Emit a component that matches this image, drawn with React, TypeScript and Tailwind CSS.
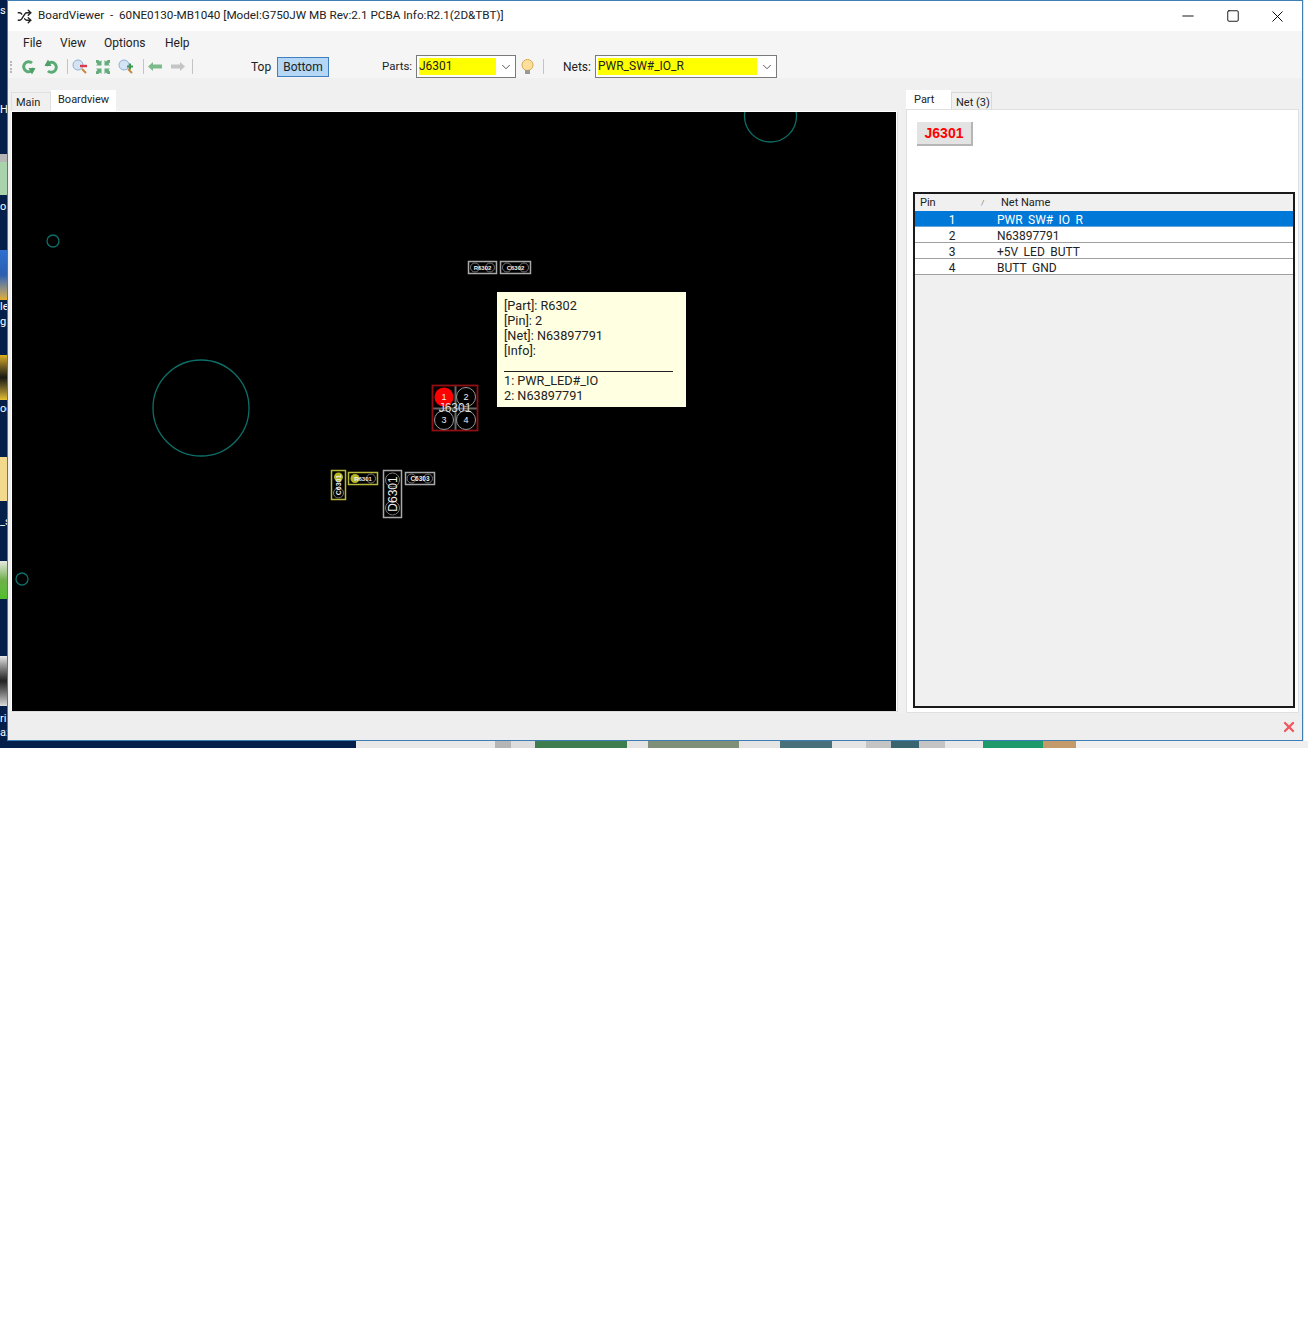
import { ChevronDown, Minus, Square, X, Shuffle } from 'lucide-react';

const font = { fontFamily: "Roboto, 'Noto Sans', sans-serif" };

// bits of the desktop that show left of the window
const desktopBits = [
  { h: 'h-[22px]', text: 's' },
  { h: 'h-[78px]', text: '' },
  { h: 'h-[20px]', text: 'H' },
  { h: 'h-[34px]', text: '' },
  { h: 'h-[8px]', cls: 'bg-[#b5b5b5]' },
  { h: 'h-[33px]', cls: 'bg-[#a9d3ab]' },
  { h: 'h-[24px]', text: 'o' },
  { h: 'h-[31px]', text: '' },
  { h: 'h-[50px]', cls: 'bg-gradient-to-b from-[#2f6fd0] via-[#2b5fb0] to-[#e2ad1c]' },
  { h: 'h-[14px]', text: 'le' },
  { h: 'h-[16px]', text: 'g' },
  { h: 'h-[25px]', text: '' },
  { h: 'h-[45px]', cls: 'bg-gradient-to-b from-[#e0b020] via-[#1a1a10] to-[#e8c030]' },
  { h: 'h-[18px]', text: 'oc' },
  { h: 'h-[39px]', text: '' },
  { h: 'h-[44px]', cls: 'bg-[#f2d98c]' },
  { h: 'h-[14px]', text: '' },
  { h: 'h-[14px]', text: '_s' },
  { h: 'h-[32px]', text: '' },
  { h: 'h-[38px]', cls: 'bg-gradient-to-b from-[#e8e8e0] via-[#6fb04a] to-[#4fc02a]' },
  { h: 'h-[57px]', text: '' },
  { h: 'h-[50px]', cls: 'bg-gradient-to-b from-[#e8e8e8] via-[#222222] to-[#dddddd]' },
  { h: 'h-[6px]', text: '' },
  { h: 'h-[14px]', text: 'ri' },
  { h: 'h-[14px]', text: 'a:' },
];

const bottomBits = [
  { w: 'w-[356px]', cls: 'bg-[#04204a]' },
  { w: 'w-[139px]', cls: 'bg-[#e8e8e8]' },
  { w: 'w-[16px]', cls: 'bg-[#b5b5b5]' },
  { w: 'w-[24px]', cls: 'bg-[#dddddd]' },
  { w: 'w-[92px]', cls: 'bg-[#3f7d4e]' },
  { w: 'w-[21px]', cls: 'bg-[#e4e4e4]' },
  { w: 'w-[91px]', cls: 'bg-[#7f8f78]' },
  { w: 'w-[41px]', cls: 'bg-[#e4e4e4]' },
  { w: 'w-[52px]', cls: 'bg-[#47707a]' },
  { w: 'w-[34px]', cls: 'bg-[#e4e4e4]' },
  { w: 'w-[25px]', cls: 'bg-[#c4c4c4]' },
  { w: 'w-[28px]', cls: 'bg-[#3a6570]' },
  { w: 'w-[26px]', cls: 'bg-[#c4c4c4]' },
  { w: 'w-[38px]', cls: 'bg-[#e8e8e8]' },
  { w: 'w-[60px]', cls: 'bg-[#1f9a6a]' },
  { w: 'w-[33px]', cls: 'bg-[#c49a6a]' },
  { w: 'flex-1', cls: 'bg-[#efefef]' },
];

const pins = [
  { pin: '1', net: 'PWR_SW#_IO_R', selected: true },
  { pin: '2', net: 'N63897791', selected: false },
  { pin: '3', net: '+5V_LED_BUTT', selected: false },
  { pin: '4', net: 'BUTT_GND', selected: false },
];

function TurnIcon({ flip }: { flip?: boolean }) {
  return (
    <svg width="15" height="16" viewBox="0 0 15 16" className={flip ? 'rotate-180' : ''}>
      <path d="M11 4A5 5 0 1 0 12.500 9" fill="none" stroke="#5aab74" strokeWidth="3" />
      <path d="M7.500 9h7l-3.500 6.500z" fill="#4f9f69" />
    </svg>
  );
}

function ZoomIcon({ plus }: { plus?: boolean }) {
  return (
    <svg width="16" height="16" viewBox="0 0 16 16">
      <circle cx="6" cy="6" r="5" fill="#d5e4f5" stroke="#8fb0d4" />
      <path d="M10 10l4 4" stroke="#c58a3c" strokeWidth="2" />
      {plus ? (
        <path d="M9 7.500h6M12 4.500v6" stroke="#3e9a52" strokeWidth="2" />
      ) : (
        <path d="M8 7h7" stroke="#dd3b4b" strokeWidth="2.400" />
      )}
    </svg>
  );
}

function FitIcon() {
  return (
    <svg width="16" height="16" viewBox="0 0 16 16" fill="#63ad7c">
      <path d="M1 1l2.500 0L5 2.500 6.500 1v5.500H1L2.500 5 1 3.500zM15 1h-2.500L11 2.500 9.500 1v5.500H15L13.500 5 15 3.500zM1 15h2.500L5 13.500 6.500 15V9.500H1L2.500 11 1 12.500zM15 15h-2.500L11 13.500 9.500 15V9.500H15L13.500 11 15 12.500z" />
    </svg>
  );
}

function ArrowIcon({ right, color }: { right?: boolean; color: string }) {
  return (
    <svg width="14" height="9" viewBox="0 0 14 9" className={right ? '-scale-x-100' : ''}>
      <path d="M0 4.500L5 0v2.500h9v4H5V9z" fill={color} />
    </svg>
  );
}

function BulbIcon() {
  return (
    <svg width="15" height="16" viewBox="0 0 15 16">
      <circle cx="7.500" cy="6" r="5.500" fill="#fbdf9a" stroke="#d9a850" />
      <rect x="5" y="11" width="5" height="4" fill="#9a9a90" />
    </svg>
  );
}

function Sep() {
  return <div className="w-px h-[15px] bg-[#c4c4c4]" />;
}

function Combo({ value, width, fill }: { value: string; width: string; fill: string }) {
  return (
    <div className={`${width} h-[23px] border border-[#7a7a7a] bg-white flex items-center pl-[2px]`}>
      <div className={`${fill} h-[17px] bg-[#ffff00] text-[12px] leading-[17px] text-[#222]`}>{value}</div>
      <div className="flex-1 flex justify-center">
        <ChevronDown size={14} strokeWidth={1.400} className="text-[#333]" />
      </div>
    </div>
  );
}

function Board() {
  const teal = '#0d6f68';
  return (
    <svg viewBox="12 112 884 599" className="w-full h-full block bg-black">
      <g fill="none" stroke={teal} strokeWidth="1.300">
        <circle cx="770.500" cy="116" r="26" />
        <circle cx="53" cy="241" r="6" />
        <circle cx="201" cy="408" r="48" />
        <circle cx="22" cy="579" r="6" />
      </g>

      {/* R6302 / C6302 */}
      <g fill="none" stroke="#a8a8a8" strokeWidth="1.500">
        <rect x="468.500" y="261.500" width="28" height="12" />
        <rect x="500.500" y="261.500" width="30" height="12" />
      </g>
      <g fill="none" stroke="#777">
        <circle cx="475" cy="267.500" r="4.500" />
        <circle cx="490" cy="267.500" r="4.500" />
        <circle cx="507" cy="267.500" r="4.500" />
        <circle cx="524" cy="267.500" r="4.500" />
      </g>
      <text x="482.500" y="270" fontSize="6" fontWeight="bold" fill="#eee" textAnchor="middle" fontFamily="Liberation Sans">R6302</text>
      <text x="515.500" y="270" fontSize="6" fontWeight="bold" fill="#eee" textAnchor="middle" fontFamily="Liberation Sans">C6302</text>

      {/* J6301 */}
      <path d="M433 408.500h44M455.500 386v44" stroke="#666" strokeWidth="2" />
      <rect x="432.500" y="385.500" width="45" height="45" fill="none" stroke="#8f0f14" strokeWidth="1.800" />
      <circle cx="444" cy="397" r="9.500" fill="#ff0000" />
      <g fill="#000" stroke="#999">
        <circle cx="466" cy="397" r="9.500" />
        <circle cx="444" cy="420" r="9.500" />
        <circle cx="466" cy="420" r="9.500" />
      </g>
      <g fontSize="9" fill="#eee" textAnchor="middle" fontFamily="Liberation Sans">
        <text x="444" y="400">1</text>
        <text x="466" y="400">2</text>
        <text x="444" y="423">3</text>
        <text x="466" y="423">4</text>
      </g>
      <text x="455" y="412" fontSize="12" fill="#ddd" textAnchor="middle" fontFamily="Liberation Sans">J6301</text>

      {/* C6301 */}
      <rect x="331.500" y="470.500" width="14" height="29" fill="none" stroke="#b8b83c" strokeWidth="1.500" />
      <circle cx="338.500" cy="477" r="4.500" fill="#b5b520" />
      <circle cx="338.500" cy="493" r="5" fill="none" stroke="#777" />
      <text transform="translate(341,485) rotate(-90)" fontSize="7" fontWeight="bold" fill="#eee" textAnchor="middle" fontFamily="Liberation Sans">C6301</text>

      {/* R6301 */}
      <rect x="348.500" y="472.500" width="29" height="12" fill="none" stroke="#b8b83c" strokeWidth="1.500" />
      <circle cx="355" cy="478.500" r="4.500" fill="#b5b520" />
      <circle cx="371" cy="478.500" r="4.500" fill="none" stroke="#777" />
      <text x="363" y="481" fontSize="6" fontWeight="bold" fill="#eee" textAnchor="middle" fontFamily="Liberation Sans">R6301</text>

      {/* D6301 */}
      <rect x="383.500" y="470.500" width="18" height="47" fill="none" stroke="#a8a8a8" strokeWidth="1.500" />
      <circle cx="392.500" cy="480" r="7" fill="none" stroke="#777" />
      <circle cx="392.500" cy="508" r="7" fill="none" stroke="#777" />
      <text transform="translate(396.500,494) rotate(-90)" fontSize="12" fill="#eee" textAnchor="middle" fontFamily="Liberation Sans">D6301</text>

      {/* C6303 */}
      <rect x="405.500" y="472.500" width="29" height="12" fill="none" stroke="#a8a8a8" strokeWidth="1.500" />
      <circle cx="411.500" cy="478.500" r="4.500" fill="none" stroke="#777" />
      <circle cx="428" cy="478.500" r="4.500" fill="none" stroke="#777" />
      <text x="420" y="481" fontSize="6.500" fontWeight="bold" fill="#eee" textAnchor="middle" fontFamily="Liberation Sans">C6303</text>
    </svg>
  );
}

export default function App() {
  return (
    <div className="w-[1308px] h-[1328px] bg-white overflow-hidden text-[#222]" style={font}>
      <div className="flex h-[741px]">
        {/* desktop behind the window */}
        <div className="w-[7px] bg-[#04204a] overflow-hidden text-[11px] leading-[14px] text-white shrink-0">
          {desktopBits.map((bit, i) => (
            <div key={i} className={`${bit.h} ${bit.cls ?? ''} whitespace-nowrap flex items-center`}>
              {bit.text}
            </div>
          ))}
        </div>

        {/* window */}
        <div className="w-[1296px] border border-[#3d7fb5] bg-[#f0f0f0] flex flex-col shrink-0">
          <div className="h-[30px] bg-white flex items-center pl-[9px] text-[11.700px] shrink-0">
            <Shuffle size={15} strokeWidth={2.200} className="mr-[6px]" />
            <span className="whitespace-pre">BoardViewer  -  60NE0130-MB1040 [Model:G750JW MB Rev:2.1 PCBA Info:R2.1(2D&TBT)]</span>
            <div className="ml-auto flex items-center text-black">
              <div className="w-[45px] flex justify-center"><Minus size={18} strokeWidth={1.200} /></div>
              <div className="w-[45px] flex justify-center"><Square size={14} strokeWidth={1.500} /></div>
              <div className="w-[45px] flex justify-center"><X size={19} strokeWidth={1.200} /></div>
              <div className="w-[2px]" />
            </div>
          </div>

          <div className="h-[24px] bg-[#f5f5f5] flex items-center pl-[15px] text-[12px] shrink-0">
            <span className="w-[37px]">File</span>
            <span className="w-[44px]">View</span>
            <span className="w-[61px]">Options</span>
            <span>Help</span>
          </div>

          <div className="h-[23px] bg-[#f5f5f5] flex items-center pl-[2px] text-[12px] shrink-0">
            <div className="w-[2px] h-[12px] border-l-2 border-dotted border-[#b8b8b8] mr-[9px]" />
            <div className="flex items-center gap-[8px]">
              <TurnIcon />
              <TurnIcon flip />
            </div>
            <div className="ml-[8px] mr-[4px]"><Sep /></div>
            <div className="flex items-center gap-[7px]">
              <ZoomIcon />
              <FitIcon />
              <ZoomIcon plus />
            </div>
            <div className="ml-[9px] mr-[4px]"><Sep /></div>
            <div className="flex items-center gap-[9px]">
              <ArrowIcon color="#7dbb8a" />
              <ArrowIcon right color="#c4c4c4" />
            </div>
            <div className="ml-[7px]"><Sep /></div>
            <span className="ml-[58px] w-[20px]">Top</span>
            <div className="ml-[6px] w-[52px] h-[20px] bg-[#b3d7f5] border border-[#3f7fc0] flex items-center justify-center">Bottom</div>
            <span className="ml-[53px] w-[29px] text-[11.500px]">Parts:</span>
            <div className="ml-[5px]"><Combo value="J6301" width="w-[100px]" fill="w-[77px]" /></div>
            <div className="ml-[4px]"><BulbIcon /></div>
            <div className="ml-[8px]"><Sep /></div>
            <span className="ml-[19px] w-[28px]">Nets:</span>
            <div className="ml-[4px]"><Combo value="PWR_SW#_IO_R" width="w-[182px]" fill="w-[159px]" /></div>
          </div>

          <div className="flex-1 min-h-0 flex pt-[11px] bg-[#f0f0f0] mt-[1px]">
            {/* board side */}
            <div className="w-[889px] ml-[3px] flex flex-col shrink-0">
              <div className="h-[21px] flex items-end text-[11px] shrink-0">
                <div className="w-[40px] h-[19px] bg-[#f0f0f0] border border-b-0 border-[#e0e0e0] pl-[4px] leading-[19px]">Main</div>
                <div className="w-[65px] h-[21px] bg-white pl-[7px] leading-[20px]">Boardview</div>
              </div>
              <div className="relative h-[601px] w-[887px] bg-white border-r border-b border-[#dcdcdc] pl-[1px] pt-px pr-px">
                <Board />
                <div className="absolute left-[486px] top-[181px] w-[189px] h-[115px] bg-[#ffffe1] pl-[7px] pt-[6px] text-[12.700px] leading-[15px] text-[#222]">
                  <div>[Part]: R6302</div>
                  <div>[Pin]: 2</div>
                  <div>[Net]: N63897791</div>
                  <div>[Info]:</div>
                  <div className="w-[169px] border-b border-[#222] h-[14px] mb-[1px]" />
                  <div>1: PWR_LED#_IO</div>
                  <div>2: N63897791</div>
                </div>
              </div>
            </div>

            {/* part side */}
            <div className="w-[394px] ml-[6px] flex flex-col shrink-0">
              <div className="h-[20px] flex items-end text-[11px] shrink-0 -mb-px">
                <div className="w-[45px] h-[20px] bg-white pl-[8px] leading-[20px]">Part</div>
                <div className="w-[41px] h-[18px] border border-b-0 border-[#d9d9d9] pl-[4px] leading-[20px]">Net (3)</div>
              </div>
              <div className="flex-1 bg-white border border-[#e0e0e0] pl-[6px] pr-[3px] pb-[4px] flex flex-col mr-[1px]">
                <div className="h-[82px] pt-[12px] shrink-0 pl-[4px]">
                  <div className="w-[56px] h-[24px] bg-[#e3e3e3] border-r-2 border-b-2 border-[#b5b5b5] text-[#ff0000] font-bold text-[14px] leading-[23px] text-center" style={{ fontFamily: "'Liberation Sans', sans-serif" }}>
                    J6301
                  </div>
                </div>
                <div className="flex-1 border-2 border-[#1a1a1a] bg-[#f0f0f0] overflow-hidden text-[12px]">
                  <div className="h-[17px] bg-[#f0f0f0] flex items-center leading-[17px] text-[11px]">
                    <div className="w-[84px] pl-[5px] relative">
                      Pin
                      <span className="absolute left-[66px] text-[8px] text-[#777]">/</span>
                    </div>
                    <div className="pl-[2px]">Net Name</div>
                  </div>
                  {pins.map((row) => (
                    <div
                      key={row.pin}
                      className={`h-[16px] flex leading-[18px] overflow-hidden border-b ${
                        row.selected ? 'bg-[#0078d7] text-white border-[#69a8dc]' : 'bg-white border-[#a0a0a0]'
                      }`}
                    >
                      <div className="w-[82px] text-center pr-[8px]">{row.pin}</div>
                      {/* the cell is too short for the underscores, as in the grid on screen */}
                      <div className="h-[13px] overflow-hidden">{row.net}</div>
                    </div>
                  ))}
                </div>
              </div>
            </div>
          </div>

          <div className="h-[27px] bg-[#eeeeee] flex items-center justify-end pr-[5px] shrink-0">
            <X size={16} strokeWidth={3.500} className="text-[#f0575f]" />
          </div>
        </div>

        <div className="flex-1 bg-white border-l border-[#e4e4e4]" />
      </div>

      <div className="flex h-[7px]">
        {bottomBits.map((bit, i) => (
          <div key={i} className={`${bit.w} ${bit.cls}`} />
        ))}
      </div>
    </div>
  );
}
